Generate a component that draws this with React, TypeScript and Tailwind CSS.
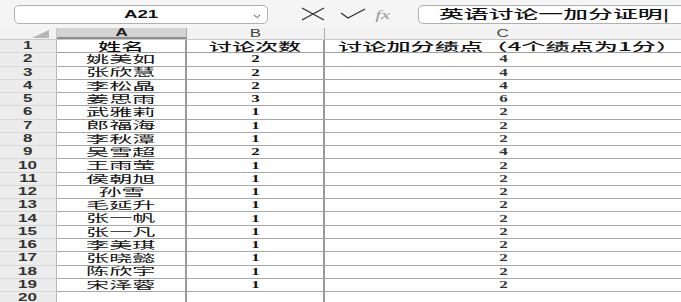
import React from 'react';

const rows: [string, string, string][] = [
  ['姚美如', '2', '4'],
  ['张欣慧', '2', '4'],
  ['李松晶', '2', '4'],
  ['姜思雨', '3', '6'],
  ['武雅莉', '1', '2'],
  ['郎福海', '1', '2'],
  ['李秋潭', '1', '2'],
  ['吴雪超', '2', '4'],
  ['王雨莹', '1', '2'],
  ['侯朝旭', '1', '2'],
  ['孙雪', '1', '2'],
  ['毛延升', '1', '2'],
  ['张一帆', '1', '2'],
  ['张一凡', '1', '2'],
  ['李美琪', '1', '2'],
  ['张晓懿', '1', '2'],
  ['陈欣宇', '1', '2'],
  ['宋泽蓉', '1', '2'],
];

const cjk = { fontFamily: '"Noto Sans CJK SC", "Noto Sans", sans-serif' };
const serif = { fontFamily: '"Liberation Serif", serif' };
const sans = { fontFamily: '"Liberation Sans", sans-serif' };

// the screenshot is stretched sideways, so glyphs are widened
function Wide({ children, className = 'scale-x-[2]' }: { children: React.ReactNode; className?: string }) {
  return <span className={`inline-block ${className}`}>{children}</span>;
}

function RowHead({ n }: { n: number }) {
  return (
    <div className="w-[57px] shrink-0 flex items-center justify-center bg-[#ececec] border-r border-[#b8b8b8] border-b border-b-[#d8d8d8] text-[10px] font-semibold text-[#333] leading-none" style={sans}>
      <Wide className="scale-x-[1.7]">{n}</Wide>
    </div>
  );
}

export default function App() {
  return (
    <div className="w-[681px] h-[302px] overflow-hidden bg-white text-[#111]" style={cjk}>
      {/* formula bar */}
      <div className="h-[28px] bg-[#f5f5f5] flex items-center">
        <div className="ml-[14px] w-[254px] h-[19px] bg-white border border-[#b0b0b0] rounded-[5px] flex items-center relative">
          <div className="flex-1 text-center text-[11px] font-semibold leading-none" style={sans}>
            <Wide className="scale-x-[1.7]">A21</Wide>
          </div>
          <svg width="8" height="5" viewBox="0 0 8 5" className="absolute right-[6px] top-[8px]">
            <path d="M1 1 L4 3.5 L7 1" stroke="#555" strokeWidth="1" fill="none" />
          </svg>
        </div>
        <svg width="26" height="14" viewBox="0 0 26 14" className="ml-[32px]">
          <path d="M2 1 L24 13 M24 1 L2 13" stroke="#333" strokeWidth="1.4" fill="none" />
        </svg>
        <svg width="26" height="12" viewBox="0 0 26 12" className="ml-[14px]">
          <path d="M1 5 L8 10 L25 1" stroke="#333" strokeWidth="1.4" fill="none" />
        </svg>
        <span className="ml-[12px] text-[13px] italic text-[#9a9a9a] leading-none" style={serif}>
          <Wide className="scale-x-[1.6]">fx</Wide>
        </span>
        <div className="ml-[31px] flex-1 h-[19px] bg-white border border-r-0 border-[#b0b0b0] rounded-l-[5px] flex items-center pl-[20px] text-[12px] font-medium whitespace-nowrap leading-none">
          <span className="inline-block scale-x-[2.07] origin-left">英语讨论一加分证明|</span>
        </div>
      </div>

      {/* column headers */}
      <div className="h-[12px] flex bg-[#f2f2f2] border-b border-[#c8c8c8] text-[10px] leading-none" style={sans}>
        <div className="w-[57px] shrink-0 border-r border-[#c8c8c8] flex items-end justify-end pr-[7px] pb-[1px]">
          <svg width="17" height="8" viewBox="0 0 17 8">
            <path d="M17 0 L17 8 L0 8 Z" fill="#b5b5b5" />
          </svg>
        </div>
        <div className="w-[130px] shrink-0 bg-[#d3d3d3] border-r border-[#a8a8a8] border-b-2 border-b-[#8d8d8d] flex items-center justify-center font-bold text-[#222]">
          <Wide className="scale-x-[1.7]">A</Wide>
        </div>
        <div className="w-[138px] shrink-0 border-r border-[#a8a8a8] flex items-center justify-center text-[#444]">
          <Wide className="scale-x-[1.7]">B</Wide>
        </div>
        <div className="flex-1 flex items-center justify-center text-[#444]">
          <Wide className="scale-x-[1.7]">C</Wide>
        </div>
      </div>

      {/* header row */}
      <div className="h-[13.28px] flex">
        <RowHead n={1} />
        <div className="w-[130px] shrink-0 border-r-2 border-[#9a9a9a] border-b border-b-[#a0a0a0] flex items-center justify-center text-[11px] font-medium leading-none">
          <Wide className="scale-x-[2.1]">姓名</Wide>
        </div>
        <div className="w-[138px] shrink-0 border-r-2 border-[#9a9a9a] border-b border-b-[#a0a0a0] flex items-center justify-center text-[11px] font-medium leading-none">
          <Wide className="scale-x-[2.1]">讨论次数</Wide>
        </div>
        <div className="flex-1 border-b border-[#a0a0a0] flex items-center pl-[13px] text-[11px] font-medium leading-none whitespace-nowrap">
          <span className="inline-block scale-x-[2.2] origin-left">讨论加分绩点（4个绩点为1分）</span>
        </div>
      </div>

      {rows.map(([name, count, score], i) => (
        <div key={i} className="h-[13.28px] flex">
          <RowHead n={i + 2} />
          <div className="w-[130px] shrink-0 border-r-2 border-[#9a9a9a] border-b border-b-[#a8a8a8] flex items-center justify-center text-[10.5px] leading-none">
            <Wide className="scale-x-[2.2]">{name}</Wide>
          </div>
          <div className="w-[138px] shrink-0 border-r-2 border-[#9a9a9a] border-b border-b-[#a8a8a8] flex items-center justify-center text-[10px] font-bold leading-none" style={serif}>
            <Wide className="scale-x-[1.7]">{count}</Wide>
          </div>
          <div className="flex-1 border-b border-[#a8a8a8] flex items-center justify-center text-[10px] font-bold leading-none text-[#333]" style={serif}>
            <Wide className="scale-x-[1.7]">{score}</Wide>
          </div>
        </div>
      ))}

      <div className="h-[13.28px] flex">
        <RowHead n={20} />
        <div className="w-[130px] shrink-0 border-r-2 border-[#9a9a9a]" />
        <div className="w-[138px] shrink-0 border-r-2 border-[#9a9a9a]" />
        <div className="flex-1" />
      </div>
    </div>
  );
}
